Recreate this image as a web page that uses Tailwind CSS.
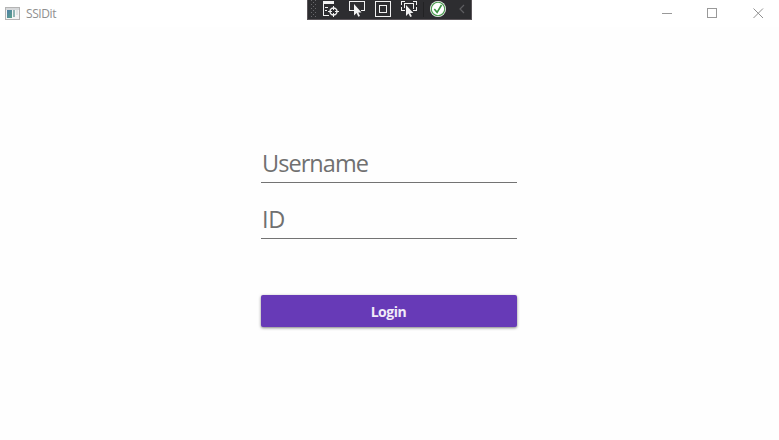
<!DOCTYPE html>
<html lang="en">
<head>
<meta charset="utf-8">
<title>SSIDit</title>
<script src="https://cdn.jsdelivr.net/npm/@tailwindcss/browser@4"></script>
</head>
<body class="relative h-[440px] w-[779px] overflow-hidden bg-[#fefefe] font-['Segoe_UI','Open_Sans','Noto_Sans',sans-serif]">
  <header class="flex h-[27px] items-center justify-between bg-white">
    <div class="flex items-center gap-[6px] pl-[5px]">
      <svg class="h-[13px] w-[15px]" viewBox="0 0 15 13" shape-rendering="crispEdges">
        <defs><linearGradient id="pane" x1="0" y1="0" x2="1" y2="1"><stop offset="0" stop-color="#4f7fa8"/><stop offset="1" stop-color="#59a08a"/></linearGradient></defs>
        <rect x=".5" y=".5" width="14" height="12" fill="#f4f4f4" stroke="#b4b4b4"/>
        <rect x="1" y="1" width="13" height="2" fill="#d6d8da"/>
        <rect x="2" y="3" width="5" height="8" fill="url(#pane)"/>
        <rect x="8" y="3" width="2" height="7" fill="#8fb5b4"/>
        <rect x="11" y="3" width="2" height="5" fill="#dfe5e5"/>
      </svg>
      <span class="text-[12px] leading-[16px] tracking-[-0.4px] text-[#8f8f8f]">SSIDit</span>
    </div>
    <div class="flex items-center gap-[35px] pr-[15px]">
      <svg class="size-[11px]" viewBox="0 0 11 11" fill="none" stroke="#999" shape-rendering="crispEdges"><path d="M.5 5.5h10"/></svg>
      <svg class="size-[11px]" viewBox="0 0 11 11" fill="none" stroke="#999" shape-rendering="crispEdges"><path d="M.5 .5h9v9h-9z"/></svg>
      <svg class="size-[11px]" viewBox="0 0 11 11" fill="none" stroke="#8f8f8f"><path d="M.5 .5l9.500 9.500M10 .5L.5 10"/></svg>
    </div>
  </header>

  <div class="absolute left-[307px] top-0 h-[20px] w-[165px] border-x border-b border-[#5a5559] bg-[#2d2d30]">
    <svg class="-ml-px block h-[19px] w-[165px]" viewBox="0 0 165 19" fill="none">
      <defs><pattern id="grip" width="4" height="4" patternUnits="userSpaceOnUse"><path d="M0 0h1v1H0zM2 2h1v1H2z" fill="#68686b"/></pattern></defs>
      <rect x="4" y="0" width="5" height="18" fill="url(#grip)"/>
      <g stroke="#f1f1f1">
        <path d="M16.500 1v14.500h5M18 7.500h3M18 10.500h2" shape-rendering="crispEdges"/>
        <path d="M16 2.500h11" stroke-width="3"/>
        <circle cx="26.500" cy="11.500" r="3.500" stroke-width="1.400"/>
        <path d="M26.500 6v4M26.500 13v4M21 11.500h4M28 11.500h4"/>
        <path d="M46.500 10.500h-4v-9h15v9h-4" shape-rendering="crispEdges"/>
        <path d="M68.500 1.500h15v15h-15zM72.500 5.500h7v7h-7z" shape-rendering="crispEdges"/>
        <path d="M94.500 5v-3.500h3.500M106 1.500h3.500v3.500M94.500 7v3.500h3M106 10.500h3.500v-3.500M97.500 8v-4.500h9v5" shape-rendering="crispEdges"/>
      </g>
      <path d="M47 4v11.500l2.600-2.500 1.700 3.700 1.700-.8-1.700-3.500h3.200z" fill="#f1f1f1"/>
      <path d="M99 5v11l2.500-2.400 1.700 3.500 1.700-.8-1.700-3.400h3.200z" fill="#f1f1f1"/>
      <path d="M116.500 2v15" stroke="#222224" shape-rendering="crispEdges"/>
      <circle cx="131" cy="9" r="8" fill="#f5f5f5"/>
      <circle cx="131" cy="9" r="6.700" fill="#fff" stroke="#4a9b4e" stroke-width="1.100"/>
      <path d="M127.300 9l2.800 3.300 4.400-7.300" stroke="#3a9140" stroke-width="1.600"/>
      <path d="M157 5l-4 4 4 4" stroke="#5e5e61" stroke-width="1.200"/>
    </svg>
  </div>

  <main class="flex flex-col items-center pr-[2px] pt-[117px]">
    <form class="flex w-[256px] flex-col">
      <label class="flex h-[39px] items-start border-b border-[#737373] pl-[1.500px] text-[23.500px] leading-[38px] tracking-[-0.95px] text-[#707070]">Username</label>
      <label class="mt-[17px] flex h-[39px] items-start border-b border-[#737373] pl-[1.500px] text-[23.500px] leading-[38px] tracking-[-0.3px] text-[#707070]">ID</label>
      <button type="button" class="mt-[56px] h-[32px] rounded-[2px] bg-[#673ab7] text-[14px] font-bold leading-[32px] tracking-[-0.45px] text-[#f0ebf8] shadow-[0_1px_3px_rgba(0,0,0,0.5)]"><span class="relative top-px">Login</span></button>
    </form>
  </main>
</body>
</html>
